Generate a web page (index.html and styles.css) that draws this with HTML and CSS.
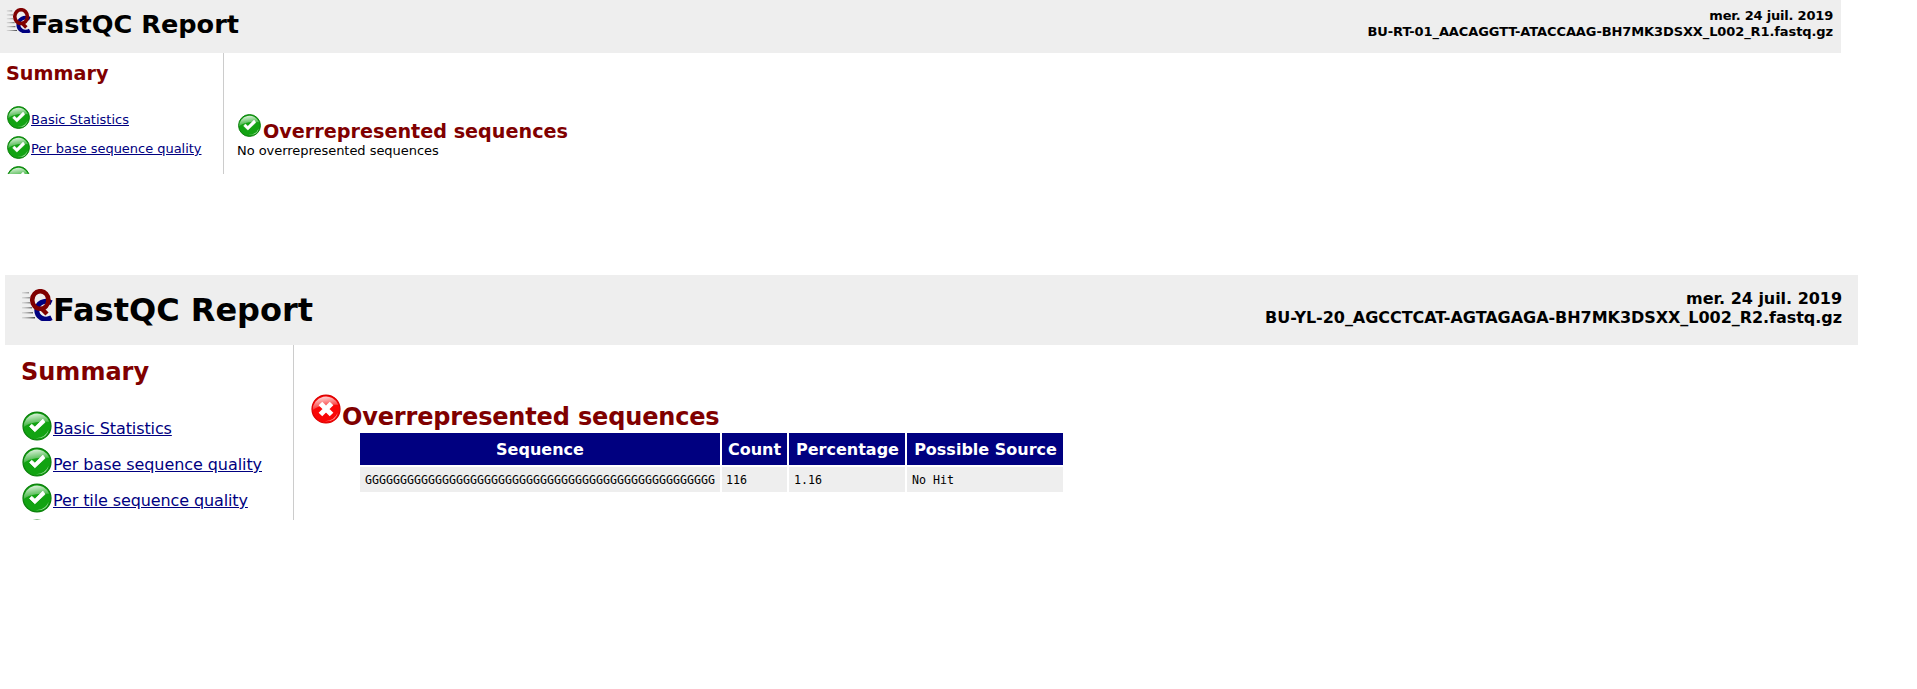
FILE: index.html
```html
<!DOCTYPE html>
<html lang="fr">
<head>
<meta charset="utf-8">
<title>FastQC Report</title>
<link rel="stylesheet" href="styles.css">
</head>
<body>
<svg class="defs" width="0" height="0" aria-hidden="true">
  <defs>
    <linearGradient id="gloss" x1="0" y1="0" x2="0.3" y2="1">
      <stop offset="0" stop-color="#fff" stop-opacity=".95"/>
      <stop offset="1" stop-color="#fff" stop-opacity=".1"/>
    </linearGradient>
    <linearGradient id="speed"><stop offset="0" stop-color="#bbb" stop-opacity=".4"/><stop offset="1" stop-color="#444"/></linearGradient>
    <symbol id="pass" viewBox="0 0 30 30">
      <circle cx="15" cy="15" r="13.100" fill="#12a312" stroke="#0c800c" stroke-width="1.2"/>
      <path d="M2.600 16A12.400 12.400 0 0 1 26.500 11C21 11 10 10 2.600 16Z" fill="url(#gloss)"/>
      <path d="M14 26.500Q23 26 26 18.500Q24.500 27 14 26.500Z" fill="#fff" opacity=".6"/>
      <path d="M8 15.500L10 13.300L13 16L20.500 8.500L22.500 11.500L13 20.500Z" fill="#fff" stroke="#fff" stroke-width=".7"/>
    </symbol>
    <symbol id="fail" viewBox="0 0 30 30">
      <circle cx="15" cy="15" r="13.100" fill="#f90606" stroke="#d00" stroke-width="1.2"/>
      <path d="M2.600 16A12.400 12.400 0 0 1 26.500 11C21 11 10 10 2.600 16Z" fill="url(#gloss)"/>
      <path d="M14 26.500Q23 26 26 18.500Q24.500 27 14 26.500Z" fill="#fff" opacity=".6"/>
      <path d="M9.800 9.800L20.200 20.200M20.200 9.800L9.800 20.200" stroke="#fff" stroke-width="4.800"/>
    </symbol>
    <symbol id="logo" viewBox="0 0 32 32">
      <path d="M1 3h7v1.500h-7zM1 8h8v1.500h-8zM1 13h8v1.500h-8zM1 18h10v1.500h-10zM1 23h11v1.500h-11zM1 28h13v1.500h-13z" fill="url(#speed)"/>
      <path d="M30.500 13.700C23 10 15.800 14.500 15.800 21.300S23 32.500 30.500 28.800" fill="none" stroke="#00007f" stroke-width="5"/>
      <path d="M20 19L26 25" stroke="#7f0000" stroke-width="4.500"/>
      <ellipse cx="19.300" cy="11" rx="8.100" ry="8.800" fill="none" stroke="#7f0000" stroke-width="4.600"/>
    </symbol>
  </defs>
</svg>
<section class="report small">
  <header class="header">
    <h1 class="title"><svg class="logo"><use href="#logo"/></svg><span>FastQC Report</span></h1>
    <div class="file"><div class="date">mer. 24 juil. 2019</div><div>BU-RT-01_AACAGGTT-ATACCAAG-BH7MK3DSXX_L002_R1.fastq.gz</div></div>
  </header>
  <div class="body">
    <nav class="summary">
      <h2>Summary</h2>
      <ul>
        <li><svg class="icon"><use href="#pass"/></svg><a href="#M0">Basic Statistics</a></li>
        <li><svg class="icon"><use href="#pass"/></svg><a href="#M1">Per base sequence quality</a></li>
        <li><svg class="icon"><use href="#pass"/></svg></li>
      </ul>
    </nav>
    <main class="main">
      <h2><svg class="icon"><use href="#pass"/></svg><span>Overrepresented sequences</span></h2>
      <p>No overrepresented sequences</p>
    </main>
  </div>
</section>
<section class="report large">
  <header class="header">
    <h1 class="title"><svg class="logo"><use href="#logo"/></svg><span>FastQC Report</span></h1>
    <div class="file"><div class="date">mer. 24 juil. 2019</div><div>BU-YL-20_AGCCTCAT-AGTAGAGA-BH7MK3DSXX_L002_R2.fastq.gz</div></div>
  </header>
  <div class="body">
    <nav class="summary">
      <h2>Summary</h2>
      <ul>
        <li><svg class="icon"><use href="#pass"/></svg><a href="#N0">Basic Statistics</a></li>
        <li><svg class="icon"><use href="#pass"/></svg><a href="#N1">Per base sequence quality</a></li>
        <li><svg class="icon"><use href="#pass"/></svg><a href="#N2">Per tile sequence quality</a></li>
        <li><svg class="icon"><use href="#pass"/></svg></li>
      </ul>
    </nav>
    <main class="main">
      <h2><svg class="icon"><use href="#fail"/></svg><span>Overrepresented sequences</span></h2>
      <table>
        <colgroup><col class="c-seq"><col class="c-count"><col class="c-pct"><col class="c-src"></colgroup>
        <thead><tr><th>Sequence</th><th>Count</th><th>Percentage</th><th>Possible Source</th></tr></thead>
        <tbody><tr><td>GGGGGGGGGGGGGGGGGGGGGGGGGGGGGGGGGGGGGGGGGGGGGGGGGG</td><td>116</td><td>1.16</td><td>No Hit</td></tr></tbody>
      </table>
    </main>
  </div>
</section>
</body>
</html>
```
FILE: styles.css
```css
body { margin: 0; background: #fff; color: #000; font-family: "DejaVu Sans", sans-serif; overflow: hidden; }
h1, h2, p, ul { margin: 0; padding: 0; }
ul { list-style: none; }
.defs { display: block; }
.report { display: flex; flex-direction: column; overflow: hidden; }
.header { display: flex; justify-content: space-between; background: #eee; box-sizing: border-box; flex: none; }
.title { display: flex; align-items: flex-start; white-space: nowrap; }
.file { font-weight: bold; text-align: right; }
.body { display: flex; flex: 1; min-height: 0; overflow: hidden; }
.summary { box-sizing: border-box; border-right: 1px solid #ccc; flex: none; overflow: hidden; }
h2 { color: #800000; font-weight: bold; white-space: nowrap; }
li, .main h2 { display: flex; align-items: flex-start; white-space: nowrap; }
.icon, .logo { flex: none; display: block; }
a { color: #000080; }

.small { width: 1841px; height: 174px; font-size: 13px; }
.small .header { height: 53px; padding: 8px 8px 0 6px; }
.small .title { font-size: 25.6px; line-height: 32px; }
.small .logo { width: 25px; height: 25px; }
.small .file { line-height: 16px; letter-spacing: -0.1px; }
.small .date { letter-spacing: -0.2px; }
.small .summary { width: 224px; padding: 10px 0 0 6px; }
.small .summary h2 { font-size: 19.2px; line-height: 22px; margin-bottom: 20px; }
.small li { height: 30px; }
.small .icon { width: 25px; height: 25px; }
.small li a { line-height: 16px; margin-top: 7px; }
.small li + li a { margin-top: 6px; letter-spacing: -0.03px; }
.small .main { padding: 60px 0 0 13px; }
.small .main h2 { font-size: 19.2px; height: 29px; }
.small .main h2 span { line-height: 22px; margin: 8px 0 0 1px; }
.small p { line-height: 16px; margin-top: 1px; letter-spacing: -0.04px; }

.large { width: 1853px; height: 245px; margin: 101px 0 0 5px; font-size: 16px; }
.large .header { height: 70px; padding: 14px 16px 0; }
.large .title { font-size: 32px; line-height: 42px; }
.large .logo { width: 32px; height: 32px; }
.large .file { line-height: 19px; letter-spacing: -0.04px; }
.large .summary { width: 289px; padding: 13px 0 0 16px; }
.large .summary h2 { font-size: 24px; line-height: 28px; margin-bottom: 24px; }
.large li { height: 36px; }
.large .icon { width: 32px; height: 32px; }
.large li a { line-height: 19px; margin-top: 9px; letter-spacing: -0.07px; }
.large li:nth-child(odd) a { letter-spacing: -0.11px; }
.large .main { padding: 48px 0 0 16px; }
.large .main h2 { font-size: 24px; height: 38px; letter-spacing: -0.16px; }
.large .main h2 span { line-height: 28px; margin-top: 10px; }
table { margin-left: 48px; width: 707px; table-layout: fixed; border-spacing: 2px; }
.c-seq { width: 360px; }
.c-count { width: 65px; }
.c-pct { width: 116px; }
.c-src { width: 156px; }
th { height: 32px; padding: 0; background: #000080; color: #fff; white-space: nowrap; }
th:nth-child(n+3) { padding-left: 1px; }
td { height: 25px; box-sizing: border-box; padding: 0 5px; background: #eee; font-family: "DejaVu Sans Mono", monospace; font-size: 11.630px; line-height: 14px; }
td:nth-child(2) { padding-left: 4px; }
```
